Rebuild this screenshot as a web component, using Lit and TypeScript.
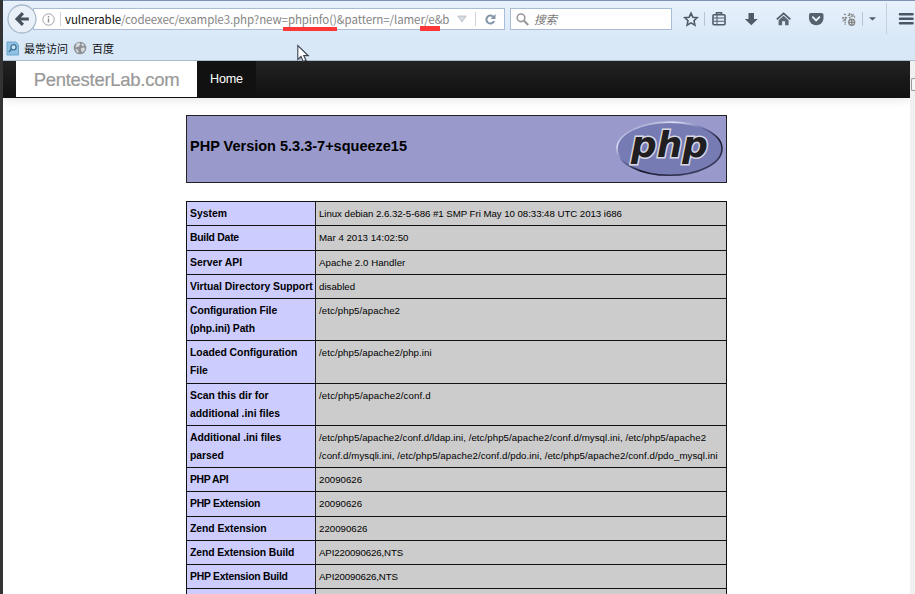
import { LitElement, html, css } from "lit";
import { customElement, property } from "lit/decorators.js";

/* keyGap / valueGap: letter spacing in px for each column of the row */
type Row = { lines: string[]; values: string[]; keyGap?: number; valueGap?: number };

const ROWS: Row[] = [
  { lines: ["System"], values: ["Linux debian 2.6.32-5-686 #1 SMP Fri May 10 08:33:48 UTC 2013 i686"], valueGap: -0.05 },
  { lines: ["Build Date"], values: ["Mar 4 2013 14:02:50"], keyGap: -0.25 },
  { lines: ["Server API"], values: ["Apache 2.0 Handler"], valueGap: 0.04 },
  { lines: ["Virtual Directory Support"], values: ["disabled"], keyGap: -0.03 },
  { lines: ["Configuration File", "(php.ini) Path"], values: ["/etc/php5/apache2"], keyGap: -0.1, valueGap: 0.08 },
  { lines: ["Loaded Configuration", "File"], values: ["/etc/php5/apache2/php.ini"], keyGap: -0.03, valueGap: 0.07 },
  { lines: ["Scan this dir for", "additional .ini files"], values: ["/etc/php5/apache2/conf.d"], keyGap: -0.03, valueGap: 0.12 },
  {
    lines: ["Additional .ini files", "parsed"],
    values: [
      "/etc/php5/apache2/conf.d/ldap.ini, /etc/php5/apache2/conf.d/mysql.ini, /etc/php5/apache2",
      "/conf.d/mysqli.ini, /etc/php5/apache2/conf.d/pdo.ini, /etc/php5/apache2/conf.d/pdo_mysql.ini",
    ],
    keyGap: -0.05,
    valueGap: 0.06,
  },
  { lines: ["PHP API"], values: ["20090626"], keyGap: -0.4 },
  { lines: ["PHP Extension"], values: ["20090626"], keyGap: -0.28 },
  { lines: ["Zend Extension"], values: ["220090626"], keyGap: -0.05 },
  { lines: ["Zend Extension Build"], values: ["API220090626,NTS"], keyGap: -0.1, valueGap: -0.13 },
  { lines: ["PHP Extension Build"], values: ["API20090626,NTS"], keyGap: -0.26, valueGap: -0.13 },
  { lines: [""], values: [""] },
];

@customElement("browser-chrome")
export class BrowserChrome extends LitElement {
  static styles = css`
    :host {
      display: block;
      height: 61px;
      box-sizing: border-box;
      border-top: 1px solid #7d93b2;
      border-bottom: 1px solid #a9bccf;
      background: linear-gradient(#e8f1fc, #d9e8f7 38px, #d8e8f7);
      font-family: "Noto Sans CJK SC", sans-serif;
      position: relative;
    }
    .tools { display: flex; height: 36px; align-items: center; padding-left: 7px; }
    .back { flex: none; width: 30px; height: 30px; z-index: 1; margin-right: -4px; }
    .url {
      flex: none; display: flex; align-items: center; box-sizing: border-box;
      width: 472px; height: 22px; background: #fff; border: 1px solid #a9bdd6;
      padding-left: 8px; color: #858585;
    }
    .info { margin-right: 5px; flex: none; }
    .sep { width: 1px; height: 14px; background: #d0d3d8; flex: none; }
    .addr { flex: none; width: 386px; margin-left: 4px; white-space: nowrap; font-size: 11.5px; letter-spacing: -0.09px; }
    .addr b { font-weight: 400; color: #111; }
    .drop { margin: 0 8px 0 6px; flex: none; }
    .reload { margin-left: 8px; flex: none; }
    .search {
      flex: none; display: flex; align-items: center; box-sizing: border-box; width: 162px; height: 22px;
      margin-left: 5px; background: #fff; border: 1px solid #a9bdd6; padding-left: 5px; color: #777;
      font-size: 11.5px; font-style: italic; gap: 5px;
    }
    .icons { display: block; flex: none; width: 243px; height: 37px; }
    .marks { display: flex; height: 20px; align-items: center; padding-left: 6px; color: #111; margin-top: 1px; }
    .marks svg { flex: none; }
    .marks span { margin: 0 5px 0 5px; line-height: 18px; white-space: nowrap; font-size: 11px; }
    .under { position: absolute; height: 4px; background: #fb3737; top: 26px; }
    .u1 { left: 283px; width: 54px; }
    .u2 { left: 420px; width: 20px; top: 25px; height: 5px; }
  `;

  render() {
    return html`
      <div class="tools">
        <svg class="back" viewBox="0 0 30 30">
          <circle cx="15" cy="15" r="14" fill="#e9f0f8" stroke="#a9b9cd" stroke-width="1.3" />
          <path d="M21.5 15H11M15.6 9.2L9.8 15l5.8 5.8" transform="translate(.3 0)" fill="none" stroke="#47515d" stroke-width="3.2" />
        </svg>
        <div class="url">
          <svg class="info" width="13" height="13" viewBox="0 0 13 13">
            <circle cx="6.5" cy="6.5" r="5.7" fill="none" stroke="#a0a0a0" stroke-width="1" />
            <path d="M6.5 5.6v4M6.5 3v1.5" stroke="#8d8d8d" stroke-width="1.4" />
          </svg>
          <i class="sep"></i>
          <div class="addr"><b>vulnerable</b>/codeexec/example3.php?new=phpinfo()&amp;pattern=/lamer/e&amp;b</div>
          <svg class="drop" width="10" height="8" viewBox="0 0 10 8"><path d="M.8 1h8.4L5 7z" fill="#d5dae0" stroke="#b5bcc4" stroke-width=".8" /></svg>
          <i class="sep"></i>
          <svg class="reload" width="13" height="13" viewBox="0 0 13 13">
            <path d="M9.3 3.8A4 4 0 1 0 10.1 8" fill="none" stroke="#8295a6" stroke-width="2" />
            <path d="M11.5 1v5H6.6z" fill="#8295a6" />
          </svg>
        </div>
        <div class="search">
          <svg width="13" height="13" viewBox="0 0 13 13"><circle cx="5" cy="4.8" r="3.8" fill="none" stroke="#999" stroke-width="1.6" /><path d="M7.8 7.6l4.4 4.4" stroke="#999" stroke-width="2.1" /></svg>
          <span>搜索</span>
        </div>
        <svg class="icons" viewBox="672 1 243 37">
          <path d="M691 13.2l1.8 4 4.4.5-3.2 3 .9 4.4-3.9-2.2-3.9 2.2.9-4.4-3.2-3 4.4-.5z" fill="#e5eef8" stroke="#4f5b68" stroke-width="1.6" />
          <path d="M704.5 12v14M862.5 12v14" stroke="#b8c4d2" />
          <g fill="none" stroke="#4f5b68">
            <rect x="713" y="14.7" width="12" height="10" rx="1" stroke-width="1.6" />
            <path d="M716.5 14.5v-1.7h5v1.7" stroke-width="1.6" />
            <path d="M714 18h10M714 21.3h10" stroke-width="1.1" /><path d="M717 15v9" />
          </g>
          <path d="M748.5 13h5.5v6h3.7l-6.4 6.3-6.4-6.3h3.6z" fill="#505b68" />
          <path d="M776.8 19.4l6.8-6.1 6.8 6.1" fill="none" stroke="#4f5b68" stroke-width="1.7" />
          <path d="M778.6 20.2l5-4.5 5 4.5v5h-3.5v-4h-3v4h-3.5z" fill="#5b6773" />
          <path d="M810.5 13h11q2 0 2 2v3.3a7.2 7 0 0 1-14.5 0V15q0-2 1.5-2z" fill="#566270" />
          <path d="M812.3 16.7l3.8 3.7 3.8-3.7" fill="none" stroke="#edf3fa" stroke-width="1.8" />
          <g fill="none" stroke="#858585" stroke-width="1.3">
            <path d="M844 14l2 1M842 18l5-.6-4.5 4M845.2 19v6M850 13l-2 3M848 15.5l5.5-1.5M849 18l5-3M854 16l.8 1.5M849 19.5h5.5" stroke-dasharray="2 .6" />
            <circle cx="851.7" cy="22.3" r="3" /><path d="M849 22.3h5.6M851.7 19.5v6" />
          </g>
          <path d="M869 17.2h7l-3.5 3.4z" fill="#4f5b68" />
          <path d="M886.5 3v31" stroke="#c2d0df" />
          <path d="M900 14.2h12.5M900 18.7h12.5M900 23.2h12.5" stroke="#4a5664" stroke-width="2.6" stroke-linecap="round" />
        </svg>
      </div>
      <div class="marks">
        <svg width="13" height="15" viewBox="0 0 13 15">
          <path d="M1 1h9l2.5 3v10H1z" fill="#8fc1e2" stroke="#6ba5cc" />
          <circle cx="7.5" cy="6.2" r="2.6" fill="#cce5f5" stroke="#3f7197" stroke-width="1.3" /><path d="M5.6 8L3 11" stroke="#3f7197" stroke-width="1.6" />
        </svg>
        <span>最常访问</span>
        <svg width="14" height="14" viewBox="0 0 14 14">
          <circle cx="7" cy="7" r="6.3" fill="#8c9095" />
          <path d="M3.5 2.5l3-1 1 2-2 2.3-3 .7zM9 2l2.6 2-1.8 1.5L8.5 4zM2 8l2.5.5L6 11l-1.5 1zM8 7l3.5-.6.5 2-2.5 3.2L8 9.5z" fill="#d6d9dc" />
        </svg>
        <span>百度</span>
      </div>
      <i class="under u1"></i><i class="under u2"></i>
    `;
  }
}

@customElement("php-logo")
export class PhpLogo extends LitElement {
  static styles = css`
    :host { display: block; width: 110px; height: 60px; }
    .word { font: italic bold 36px "DejaVu Sans", sans-serif; }
  `;
  render() {
    return html`<svg width="110" height="60" viewBox="0 0 110 60">
      <defs>
        <linearGradient id="rim" x1="0.1" y1="0" x2="0.9" y2="1">
          <stop offset="0" stop-color="#8084bc" /><stop offset=".22" stop-color="#dfe1f4" />
          <stop offset=".42" stop-color="#6a70aa" /><stop offset=".62" stop-color="#17172a" /><stop offset="1" stop-color="#44486f" />
        </linearGradient>
      </defs>
      <ellipse cx="54.5" cy="29.7" rx="52.5" ry="26.6" fill="#777bb4" stroke="url(#rim)" stroke-width="1.6" />
      <text class="word" x="16" y="37.5" textLength="77" lengthAdjust="spacingAndGlyphs" fill="#211e22"
        stroke="#d8d8e4" stroke-width="3" paint-order="stroke" stroke-linejoin="miter">php</text>
    </svg>`;
  }
}

@customElement("info-row")
export class InfoRow extends LitElement {
  @property({ attribute: false }) row!: Row;
  static styles = css`
    :host { display: grid; grid-template-columns: 129px 1fr; border-top: 1px solid #111; line-height: 18px; color: #000; }
    .key { background: #ccccff; border-right: 1px solid #222; font-weight: 700; padding: 3px 0 2.25px 3px; font-size: 10.4px; }
    .val { background: #cccccc; padding: 3px 0 2.25px 3px; font-size: 9.7px; }
    .key div, .val div { white-space: nowrap; height: 18px; }
  `;
  render() {
    const { lines, values, keyGap = 0, valueGap = 0 } = this.row;
    return html`
      <div class="key" style="letter-spacing:${keyGap}px">${lines.map((l) => html`<div>${l}</div>`)}</div>
      <div class="val" style="letter-spacing:${valueGap}px">${values.map((l) => html`<div>${l}</div>`)}</div>
    `;
  }
}

@customElement("app-root")
export class AppRoot extends LitElement {
  static styles = css`
    :host { display: block; position: relative; height: 594px; overflow: hidden; background: #fff; font-family: "Liberation Sans", Arial, sans-serif; }
    .window { display: flex; height: 533px; }
    .frame { position: absolute; left: 0; top: 0; width: 3px; height: 594px; background: #333; }
    .page { width: 907px; margin-left: 3px; }
    .nav { display: flex; height: 37px; box-sizing: border-box; border-bottom: 1px solid #111; background: linear-gradient(#222, #111); padding-left: 13px; box-shadow: 0 1px 10px rgba(0, 0, 0, 0.12); }
    .brand { width: 181px; height: 36px; background: #fff; color: #999; font-size: 18.5px; letter-spacing: -0.28px; line-height: 38px; text-align: center; -webkit-text-stroke: 0.2px #999; }
    .home { width: 59px; height: 36px; background: #111; color: #fff; font-size: 12.6px; letter-spacing: -0.2px; line-height: 36px; text-align: center; }
    .body { width: 541px; margin: 17px 0 0 183px; }
    .title { display: flex; align-items: center; justify-content: space-between; box-sizing: border-box; height: 68px; border: 1px solid #222; background: #9999cc; padding: 0 1px 0 3px; font-size: 14.5px; font-weight: 700; color: #000; }
    .title span { margin-top: -6px; white-space: nowrap; }
    .table { margin-top: 18px; box-sizing: border-box; border: solid #111; border-width: 0 1px; }
    .scroll { width: 5px; background: #f0f0f0; box-sizing: border-box; padding: 17px 0 0 1px; }
    .thumb { display: block; height: 13px; box-sizing: border-box; border: 1px solid #999; border-right: 0; border-radius: 2px 0 0 2px; background: #f6f6f6; }
    .cursor { position: absolute; left: 296px; top: 44px; }
  `;
  render() {
    return html`
      <browser-chrome></browser-chrome>
      <div class="window">
        <div class="page">
          <div class="nav"><div class="brand">PentesterLab.com</div><div class="home">Home</div></div>
          <div class="body">
            <div class="title"><span>PHP Version 5.3.3-7+squeeze15</span><php-logo></php-logo></div>
            <div class="table">${ROWS.map((r) => html`<info-row .row=${r}></info-row>`)}</div>
          </div>
        </div>
        <div class="scroll"><i class="thumb"></i></div>
      </div>
      <i class="frame"></i>
      <svg class="cursor" width="16" height="20" viewBox="0 0 16 20">
        <path d="M2.5 2v14l3.2-3 2.3 5 2.6-1.2-2.2-4.8h4.4z" transform="translate(.9 .8)" fill="#000" opacity=".22" />
        <path d="M1.8 1.5v14l3.2-3 2.3 5 2.6-1.2-2.2-4.8h4.4z" fill="#fff" stroke="#3d4450" stroke-width="1.1" />
      </svg>
    `;
  }
}
